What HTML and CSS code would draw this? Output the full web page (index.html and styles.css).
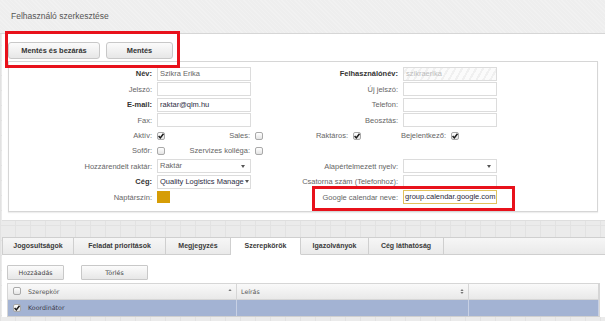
FILE: index.html
```html
<!DOCTYPE html>
<html lang="hu">
<head>
  <meta charset="UTF-8" />
  <meta name="viewport" content="width=device-width, initial-scale=1.0"/>
  <title>Felhasználó szerkesztése</title>

  <link rel="stylesheet" href="styles.css">
</head>
<body>
<div class="page">

  <div class="titlebar">Felhasználó szerkesztése</div>

  <div class="editor">
    <div class="toolbar">
      <button class="btn btn-wide">Mentés és bezárás</button>
      <button class="btn btn-save">Mentés</button>
    </div>

    <div class="fieldset">
      <div class="row">
        <label class="strong">Név:</label>
        <div class="input">Szikra Erika</div>
        <label class="strong">Felhasználónév:</label>
        <div class="input disabled">szikraerika</div>
      </div>
      <div class="row">
        <label>Jelszó:</label>
        <div class="input"></div>
        <label>Új jelszó:</label>
        <div class="input"></div>
      </div>
      <div class="row">
        <label class="strong">E-mail:</label>
        <div class="input dark">raktar@qlm.hu</div>
        <label>Telefon:</label>
        <div class="input"></div>
      </div>
      <div class="row">
        <label>Fax:</label>
        <div class="input"></div>
        <label>Beosztás:</label>
        <div class="input"></div>
      </div>

      <div class="row checks">
        <label>Aktív:</label>
        <span class="cb checked"><svg viewBox="0 0 8 8"><path d="M1.6 4.1 L3.3 5.9 L6.5 1.7"/></svg></span>
        <label>Sales:</label>
        <span class="cb"></span>
        <label>Raktáros:</label>
        <span class="cb checked"><svg viewBox="0 0 8 8"><path d="M1.6 4.1 L3.3 5.9 L6.5 1.7"/></svg></span>
        <label>Bejelentkező:</label>
        <span class="cb checked"><svg viewBox="0 0 8 8"><path d="M1.6 4.1 L3.3 5.9 L6.5 1.7"/></svg></span>
      </div>
      <div class="row checks">
        <label>Sofőr:</label>
        <span class="cb"></span>
        <label>Szervizes kolléga:</label>
        <span class="cb"></span>
      </div>

      <div class="row">
        <label>Hozzárendelt raktár:</label>
        <div class="input select"><span class="value">Raktár</span><i class="caret"></i></div>
        <label>Alapértelmezett nyelv:</label>
        <div class="input select"><span class="value"></span><i class="caret"></i></div>
      </div>
      <div class="row">
        <label class="strong">Cég:</label>
        <div class="input select dark"><span class="value">Quality Logistics Manage</span><i class="caret"></i><span class="dot">.</span></div>
        <label>Csatorna szám (Telefonhoz):</label>
        <div class="input"></div>
      </div>
      <div class="row">
        <label>Naptárszín:</label>
        <div><span class="swatch"></span></div>
        <label>Google calendar neve:</label>
        <div class="input focus"><span class="typed">group.calendar.google.com</span></div>
      </div>
    </div>
  </div>

  <div class="details">
    <div class="tabs">
      <div class="tab" style="width: 71px;">Jogosultságok</div>
      <div class="tab" style="width: 92px;">Feladat prioritások</div>
      <div class="tab" style="width: 65px;">Megjegyzés</div>
      <div class="tab active" style="width: 70px;">Szerepkörök</div>
      <div class="tab" style="width: 68px;">Igazolványok</div>
      <div class="tab" style="width: 75px;">Cég láthatóság</div>
    </div>

    <div class="tab-body">
      <div class="grid-tools">
        <button class="btn btn-small" style="width: 57px;">Hozzáadás</button>
        <button class="btn btn-small" style="width: 67px;">Törlés</button>
      </div>

      <div class="grid">
        <div class="grid-row grid-head">
          <div class="cell first">
            <span class="cb"></span>Szerepkör
            <svg class="sort" viewBox="0 0 5 8"><path d="M0.5 3.5 L2.5 1 L4.5 3.5 Z"/></svg>
          </div>
          <div class="cell second">
            Leírás
            <svg class="sort" viewBox="0 0 5 8"><path d="M0.5 3.3 L2.5 1 L4.5 3.3 Z M0.5 4.7 L2.5 7 L4.5 4.7 Z"/></svg>
          </div>
          <div class="cell"></div>
        </div>
        <div class="grid-row selected">
          <div class="cell first"><span class="cb checked"><svg viewBox="0 0 8 8"><path d="M1.6 4.1 L3.3 5.9 L6.5 1.7"/></svg></span>Koordinátor</div>
          <div class="cell second"></div>
          <div class="cell"></div>
        </div>
      </div>
    </div>
  </div>

  <div class="mark mark-buttons"></div>
  <div class="mark mark-calendar"></div>
</div>
</body>
</html>
```

FILE: styles.css
```css
body {
  margin: 0;
  padding: 0;
  font-family: 'Liberation Sans', Arial, sans-serif;
  color: #555;
  background-color: #ebebeb;
  background-image:
    linear-gradient(90deg, #e2e2e2 1px, transparent 1px),
    linear-gradient(#e2e2e2 1px, transparent 1px);
  background-size: 15px 15px;
  overflow: hidden;
}

.page {
  position: relative;
  width: 605px;
  height: 321px;
  overflow: hidden;
}

.titlebar {
  height: 33px;
  line-height: 33px;
  padding-left: 11px;
  font-size: 8.5px;
  color: #555;
  background: #eeeeee;
  background-image: repeating-linear-gradient(45deg, #f1f1f1 0 1px, transparent 1px 3px);
  border-bottom: 1px solid #d6d6d6;
}

.editor {
  margin-left: 2px;
  background: #fff;
  padding: 8px 0 8px 0;
  border-bottom: 1px solid #dedede;
}

.toolbar {
  display: flex;
  gap: 6px;
  margin: 0 0 2px 6px;
  height: 17px;
}

.btn {
  height: 17px;
  padding: 0;
  border: 1px solid #c8c8c8;
  border-radius: 3px;
  background: linear-gradient(#fbfbfb, #e7e7e7);
  font-family: 'Liberation Sans', Arial, sans-serif;
  font-weight: bold;
  font-size: 7.4px;
  color: #333;
  box-sizing: border-box;
}

.btn-wide { width: 92px; }
.btn-save { width: 67px; }

.fieldset {
  margin: 0 7px 0 6px;
  border: 1px solid #d6d6d6;
  padding: 4.3px 0 6px 0;
  box-shadow: 0 1px 1px #eee;
}

.row {
  display: grid;
  grid-template-columns: 143px 94px 142px 94px;
  column-gap: 5px;
  height: 15.4px;
  align-items: center;
}

.row.checks {
  grid-template-columns: 143px 8px 80px 8px 80px 8px 80px 8px;
}

label {
  text-align: right;
  font-size: 7.5px;
  color: #666;
  white-space: nowrap;
}

label.strong {
  font-weight: bold;
  color: #333;
}

.input {
  height: 14px;
  box-sizing: border-box;
  border: 1px solid #dcdcdc;
  background: #fff;
  padding: 0 2px;
  font-size: 7.5px;
  line-height: 12px;
  color: #666;
  white-space: nowrap;
  overflow: hidden;
}

.input.dark { color: #2d2d44; }

.input.disabled {
  color: #bbbbbb;
  background: repeating-linear-gradient(-60deg, #fbfbfb 0 4px, #f0f0f0 4px 6px);
}

.input.select {
  display: flex;
  align-items: center;
  padding-right: 5px;
}

.select .value {
  flex: 1;
  white-space: nowrap;
}

.caret {
  width: 0;
  height: 0;
  border-left: 2.5px solid transparent;
  border-right: 2.5px solid transparent;
  border-top: 3px solid #555;
  margin-left: 1px;
}

.select .dot {
  margin-left: 1px;
}

.input.focus {
  border-color: #e2c25c;
  color: #2a2a3a;
  padding: 0 1px;
}

.typed {
  border-right: 1px solid #111;
  padding-right: 1px;
}

.swatch {
  display: block;
  width: 13px;
  height: 12px;
  background: #d69d06;
}

.cb {
  display: inline-block;
  width: 8px;
  height: 8px;
  box-sizing: border-box;
  border: 1px solid #a9a9a9;
  border-radius: 2px;
  background: linear-gradient(#ffffff, #e4e4e4);
  vertical-align: middle;
  position: relative;
}

.cb svg {
  position: absolute;
  left: -1px;
  top: -1px;
  width: 8px;
  height: 8px;
}

.cb path {
  fill: none;
  stroke: #1a1a1a;
  stroke-width: 1.5;
}

.details {
  margin: 16px 0 0 2px;
  background: #fff;
}

.tabs {
  display: flex;
  height: 18px;
  box-sizing: border-box;
  border-top: 1px solid #cfcfcf;
  border-left: 1px solid #cfcfcf;
  background: linear-gradient(#f6f6f6, #e9e9e9);
}

.tab {
  box-sizing: border-box;
  border-right: 1px solid #cfcfcf;
  border-bottom: 1px solid #cfcfcf;
  text-align: center;
  line-height: 16px;
  font-size: 7px;
  font-weight: bold;
  color: #3a3a3a;
}

.tab.active {
  background: #fff;
  border-bottom-color: #fff;
}

.tabs::after {
  content: "";
  flex: 1;
  border-bottom: 1px solid #cfcfcf;
}

.tab-body {
  padding: 10px 0 0 5px;
}

.grid-tools {
  display: flex;
  gap: 17px;
  margin-bottom: 3px;
}

.btn-small {
  height: 15px;
  font-family: 'DejaVu Sans', Verdana, sans-serif;
  font-weight: normal;
  font-size: 6.3px;
  color: #444;
  border-radius: 1px;
}

.grid {
  width: 591px;
  border: 1px solid #d6d6d6;
  border-bottom: 1px solid #d0d0d0;
  font-family: 'DejaVu Sans', Verdana, sans-serif;
  font-size: 6.3px;
  color: #555;
}

.grid-row {
  display: grid;
  grid-template-columns: 229px 232px 1fr;
}

.grid-head {
  height: 15px;
  background: linear-gradient(#f9f9f9, #e9e9e9);
  border-bottom: 1px solid #d6d6d6;
}

.grid-head .cell {
  border-right: 1px solid #d6d6d6;
}

.cell {
  display: flex;
  align-items: center;
  padding-left: 4px;
  position: relative;
}

.cell.first { padding-left: 5px; }

.cell .cb {
  margin-right: 7px;
}

.sort {
  margin-left: auto;
  margin-right: 4px;
  width: 4px;
  height: 7px;
  fill: #777;
}

.grid-row.selected {
  height: 16px;
  background: #a3b3d3;
  color: #3a3a4a;
}

.selected .cell {
  border-right: 1px solid #c7d0e4;
}

.mark {
  position: absolute;
  box-sizing: border-box;
  border: 3px solid #e8111b;
}

.mark-buttons {
  left: 5px;
  top: 31px;
  width: 175px;
  height: 37px;
}

.mark-calendar {
  left: 312px;
  top: 186px;
  width: 203px;
  height: 25px;
}
```
